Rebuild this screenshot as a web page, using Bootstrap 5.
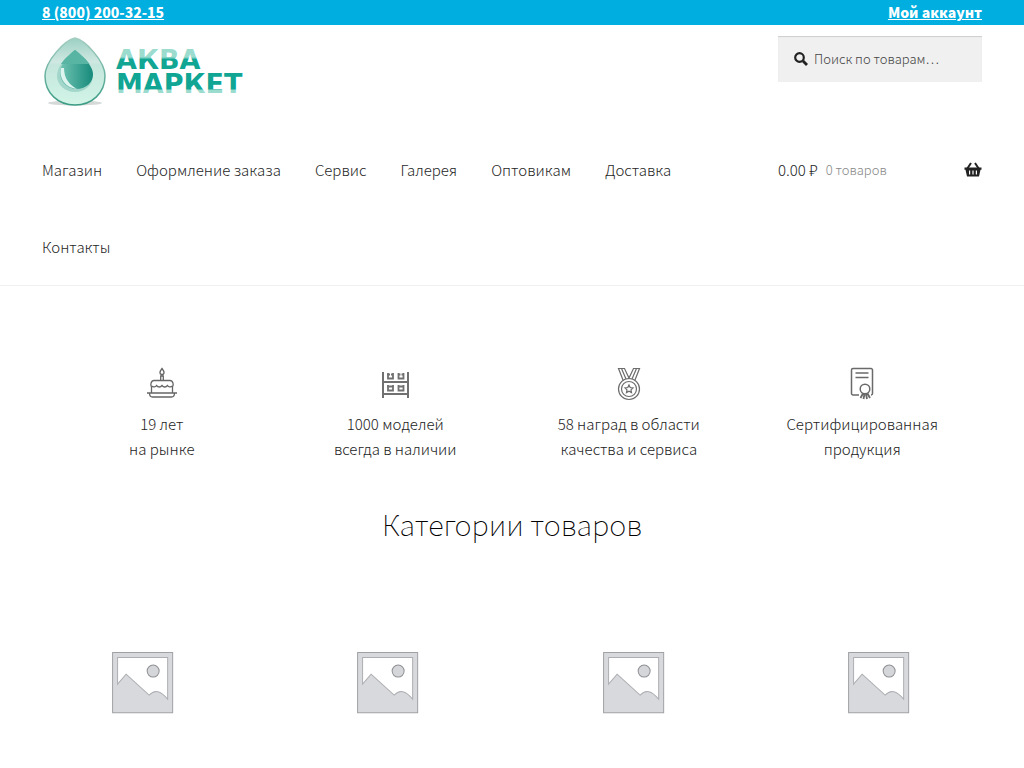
<!DOCTYPE html>
<html lang="ru">
<head>
<meta charset="utf-8">
<meta name="viewport" content="width=device-width, initial-scale=1">
<title>Аква Маркет</title>
<link href="https://cdn.jsdelivr.net/npm/bootstrap@5.3.0/dist/css/bootstrap.min.css" rel="stylesheet">
<style>
body { font-family: "Noto Sans CJK SC", "Noto Sans", sans-serif; font-size: 15px; line-height: 25px; font-weight: 300; color: #1c1c1c; }
a { color: #1f1f1f; text-decoration: none; }
.wrap { padding-left: 42px; padding-right: 42px; }
.topbar { background: #00aee0; font-size: 14px; }
.topbar a { color: #fff; font-weight: 900; text-decoration: underline; }
.side { width: 204px; }
.search-box { background: #f0f0f0; height: 46px; padding: 0 16px; box-shadow: inset 0 1px 1px rgba(0,0,0,.15); }
.search-box label { margin-right: 6px; }
.search-box input { font-size: 13px; font-weight: 300; color: #43454b; line-height: 20px; }
.search-box input::placeholder { color: #444; opacity: 1; }
.masthead { padding-top: 11px; border-bottom: 1px solid #f0f0f0; }
.brand-row { height: 95px; }
.menu { column-gap: 34px; }
.menu a, .basket { display: flex; padding: 26px 0; }
.tally { color: #888; font-size: 13px; }
.perks { padding: 81px 3px 0; }
.perks svg { display: block; margin: 0 auto 10px; }
.heading { font-size: 29px; line-height: 40px; font-weight: 100; color: #000; margin: 42px 0 39px; }
.goods { column-gap: 44px; padding-right: 3px; }
.goods a { flex: 1; }
.goods svg { display: block; width: 100%; height: auto; }
</style>
</head>
<body>
<div class="topbar wrap d-flex justify-content-between">
  <a href="#">8 (800) 200-32-15</a>
  <a href="#">Мой аккаунт</a>
</div>
<header class="masthead wrap">
  <div class="brand-row d-flex justify-content-between align-items-start">
    <a href="#" aria-label="Аква Маркет">
      <svg width="204" height="74" viewBox="0 0 204 74">
        <defs>
          <linearGradient id="shell" x1="0" y1="0" x2="0" y2="1"><stop offset="0" stop-color="#9bd0c2"/><stop offset=".36" stop-color="#d0e8e2"/><stop offset=".4" stop-color="#c4e6dc"/><stop offset="1" stop-color="#d2f5e8"/></linearGradient>
          <linearGradient id="edge" x1="0" y1="0" x2="0" y2="1"><stop offset="0" stop-color="#a5cdc1"/><stop offset="1" stop-color="#3a9c84"/></linearGradient>
          <linearGradient id="core" x1="0" y1="0" x2="1" y2="0"><stop offset="0" stop-color="#72c4b3"/><stop offset="1" stop-color="#168a7b"/></linearGradient>
          <linearGradient id="ink1" x1="0" y1="0" x2="0" y2="1"><stop offset=".42" stop-color="#9bdccf"/><stop offset=".5" stop-color="#11a594"/></linearGradient>
          <linearGradient id="ink2" x1="0" y1="0" x2="0" y2="1"><stop offset=".67" stop-color="#11a594"/><stop offset=".72" stop-color="#9bdccf"/></linearGradient>
        </defs>
        <ellipse cx="33" cy="67" rx="27" ry="2.500" fill="#d5d9d8"/>
        <path d="M33 2C23 4 3 25 3 40C3 57 16 69 33 69S63 57 63 40C63 25 43 4 33 2Z" fill="url(#shell)" stroke="url(#edge)" stroke-width="1.500"/>
        <path d="M33 14C27 19 15 29 15 40a18 16 0 0 0 36 0C51 29 39 19 33 14Z" fill="#a3d6ca"/>
        <path d="M33 14C27 19 18 28 18 37A17 16 0 0 0 34 53C45 53 51 46 51 38C51 29 39 19 33 14Z" fill="url(#core)"/>
        <path d="M33 14C28 18 21 24 19 28H47.500C45 24 38 18 33 14Z" fill="#58b5a4"/>
        <path d="M19 32A17 17 0 0 0 35 53Q22 46 22 32Z" fill="#def4ee"/>
        <g font-family="DejaVu Sans" font-weight="700" font-size="27"><text x="74" y="33" fill="url(#ink1)">АКВА</text><text x="74" y="57" fill="url(#ink2)">МАРКЕТ</text></g>
      </svg>
    </a>
    <form class="side search-box d-flex align-items-center" role="search">
      <label for="q" class="d-flex"><svg width="14" height="14" viewBox="0 0 14 14" fill="none" stroke="#222"><circle cx="5.500" cy="5.500" r="4.300" stroke-width="2.200"/><path d="M9 9l4 4" stroke-width="2.800"/></svg></label>
      <input id="q" type="search" class="border-0 bg-transparent p-0 w-100" placeholder="Поиск по товарам…">
    </form>
  </div>
  <div class="d-flex justify-content-between align-items-start">
    <nav class="menu d-flex flex-wrap col-9 pe-4">
      <a href="#">Магазин</a><a href="#">Оформление заказа</a><a href="#">Сервис</a><a href="#">Галерея</a><a href="#">Оптовикам</a><a href="#">Доставка</a><a href="#">Контакты</a>
    </nav>
    <a href="#" class="basket side align-items-center"><span>0.00 ₽</span><span class="tally ms-2">0 товаров</span>
      <svg class="ms-auto" width="18" height="16" viewBox="0 0 18 16"><path d="M3 7L7 1M15 7L11 1" stroke="#222" stroke-width="2" fill="none"/><path fill="#222" fill-rule="evenodd" d="M.5 5.500h17v2.300h-1L15 14.500H3L1.500 7.800h-1zM5 8.500v4h1.200v-4zM8.400 8.500v4h1.200v-4zM11.800 8.500v4H13v-4z"/></svg>
    </a>
  </div>
</header>
<main class="wrap">
  <section class="perks row g-0 text-center">
    <div class="col-3">
      <svg width="32" height="34" viewBox="0 0 32 34" fill="none" stroke="#666" stroke-width="1.300"><path d="M16 1.500c-1.500 2-2 3-2 4a2 2 0 0 0 4 0c0-1-.5-2-2-4zM14.700 13V9h2.600v4M5.500 26v-6C4 18 5 13.500 8 13.500h16c3 0 4 4.500 2.500 6.500v6M5.500 19c2 1.500 4 1 5-.5 1.500 2 4 2 5.500 0 1.500 2 4 2 5.500 0 1 1.500 3 2 5 .5M1 26h30M3.500 26c0 3 1 4 3 4h19c2 0 3-1 3-4"/></svg>
      19 лет<br>на рынке</div>
    <div class="col-3">
      <svg width="32" height="34" viewBox="0 0 32 34" fill="none" stroke="#707070"><path stroke-width="2" d="M4 5v26M29 5v26M3 15h27M3 27h27"/><path stroke-width="1.800" d="M9 6v5.500h5V6M19.500 6v5.500h5V6M9 18v5.500h5V18M19.500 18v5.500h5V18"/><path stroke-width="2" d="M8.500 7.500H11M12 7.500h2M19 7.500h2.500M22.500 7.500h2M8.500 19.500h6M19 19.500h6"/></svg>
      1000 моделей<br>всегда в наличии</div>
    <div class="col-3">
      <svg width="32" height="34" viewBox="0 0 32 34" fill="none" stroke="#6c6c6c" stroke-width="1.200"><circle cx="16" cy="22" r="10.500"/><circle cx="16" cy="22" r="7.500"/><path d="M16 18l1.200 2.500 2.800.4-2 2 .5 2.700-2.500-1.300-2.500 1.300.5-2.700-2-2 2.800-.4zM10 13L5.500 1.500h6L16 11 20.500 1.500h6L22 13M8.500 1.500l4.500 10.500M23.500 1.500L19 12"/></svg>
      58 наград в области<br>качества и сервиса</div>
    <div class="col-3">
      <svg width="32" height="34" viewBox="0 0 32 34" fill="none" stroke="#6a6a6a" stroke-width="1.500"><path d="M13 28H7a1.500 1.500 0 0 1-1.500-1.500V3A1.500 1.500 0 0 1 7 1.500h18A1.500 1.500 0 0 1 26.500 3v23.500A1.500 1.500 0 0 1 25 28M9.500 6h13M9.500 10.500h13"/><circle cx="19" cy="22" r="4.800"/><path stroke-width="1.800" d="M17 26.500l-2.500 4.500M18.500 27l-1 5M20 27l1 5M21.500 26.500L24 31"/></svg>
      Сертифицированная<br>продукция</div>
  </section>
  <h2 class="heading text-center">Категории товаров</h2>
  <svg width="0" height="0" class="position-absolute" aria-hidden="true"><symbol id="blank" viewBox="0 0 201 201"><path d="M70.500 70.500h60v60h-60z" fill="#d8d9dd" stroke="#a0a1a4"/><path d="M75.500 75.500h50V117Q115 104 107 113L84 92 75.500 102z" fill="#fff" stroke="#adaeb1"/><circle cx="111" cy="89" r="6" fill="#d5d6da" stroke="#8e8f92"/></symbol></svg>
  <div class="goods d-flex">
    <a href="#" aria-label="Категория 1"><svg viewBox="0 0 201 201"><use href="#blank"/></svg></a>
    <a href="#" aria-label="Категория 2"><svg viewBox="0 0 201 201"><use href="#blank"/></svg></a>
    <a href="#" aria-label="Категория 3"><svg viewBox="0 0 201 201"><use href="#blank"/></svg></a>
    <a href="#" aria-label="Категория 4"><svg viewBox="0 0 201 201"><use href="#blank"/></svg></a>
  </div>
</main>
<script src="https://cdn.jsdelivr.net/npm/bootstrap@5.3.0/dist/js/bootstrap.bundle.min.js"></script>
</body>
</html>
